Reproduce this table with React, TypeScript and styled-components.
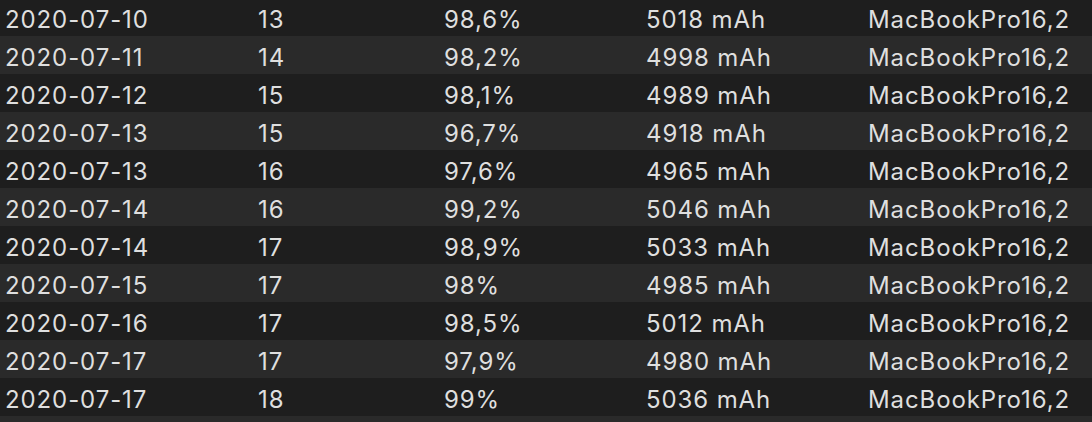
import styled, { createGlobalStyle } from "styled-components";

const GlobalStyle = createGlobalStyle`
  html, body {
    margin: 0;
    padding: 0;
    background: #1e1e1e;
    height: 422px;
    overflow: hidden;
  }
`;

const Table = styled.div`
  margin-top: -2px;
  font-family: Inter, "Liberation Sans", sans-serif;
  font-size: 24px;
  letter-spacing: 0.9px;
  color: #dfdfdf;
`;

const Row = styled.div<{ $striped: boolean }>`
  display: grid;
  grid-template-columns: 253px 186px 202px 222px 1fr;
  align-items: center;
  height: 38px;
  padding-left: 5px;
  background: ${(p) => (p.$striped ? "#2a2a2a" : "#1e1e1e")};
`;

const Cell = styled.div`
  white-space: nowrap;
  line-height: 38px;
  padding-top: 3px;
`;

const rows = [
  ["2020-07-10", "13", "98,6%", "5018 mAh"],
  ["2020-07-11", "14", "98,2%", "4998 mAh"],
  ["2020-07-12", "15", "98,1%", "4989 mAh"],
  ["2020-07-13", "15", "96,7%", "4918 mAh"],
  ["2020-07-13", "16", "97,6%", "4965 mAh"],
  ["2020-07-14", "16", "99,2%", "5046 mAh"],
  ["2020-07-14", "17", "98,9%", "5033 mAh"],
  ["2020-07-15", "17", "98%", "4985 mAh"],
  ["2020-07-16", "17", "98,5%", "5012 mAh"],
  ["2020-07-17", "17", "97,9%", "4980 mAh"],
  ["2020-07-17", "18", "99%", "5036 mAh"],
];

export default function App() {
  return (
    <>
      <GlobalStyle />
      <Table>
        {rows.map((r, i) => (
          <Row key={i} $striped={i % 2 === 1}>
            {r.map((c, j) => (
              <Cell key={j}>{c}</Cell>
            ))}
            <Cell>MacBookPro16,2</Cell>
          </Row>
        ))}
        <Row $striped={rows.length % 2 === 1} />
      </Table>
    </>
  );
}
